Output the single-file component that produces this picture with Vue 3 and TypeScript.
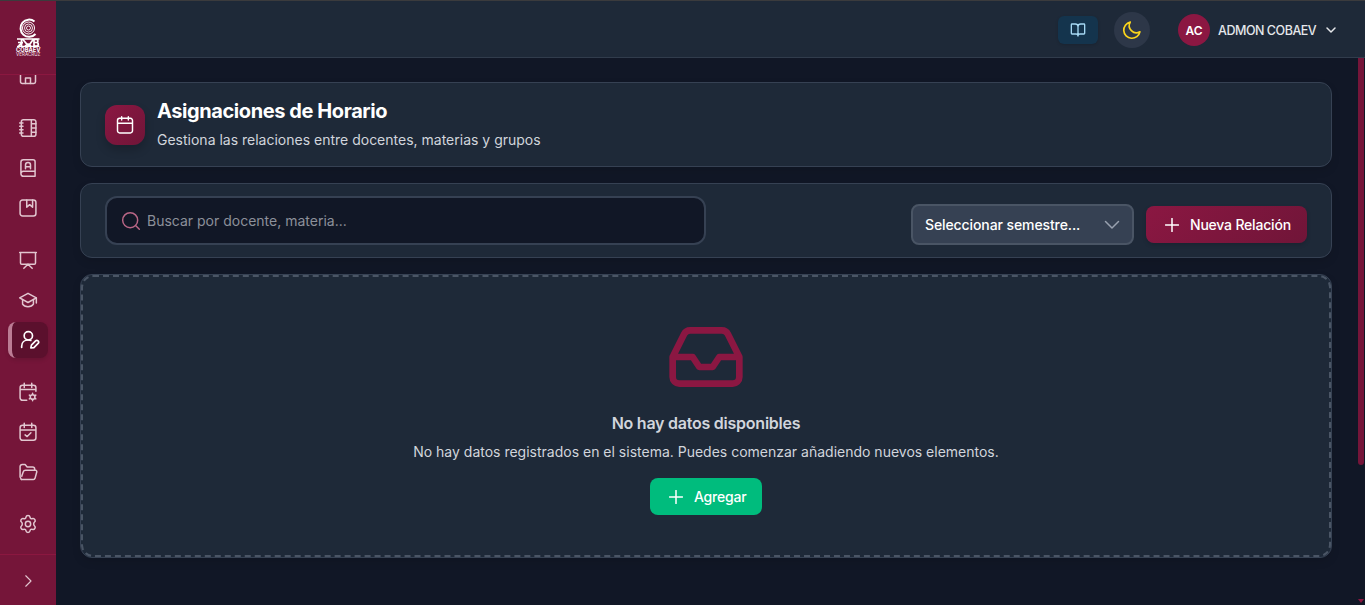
<script setup lang="ts">
interface NavItem {
  id: string
  paths: string[]
  active?: boolean
}

const groups: NavItem[][] = [
  [{ id: 'home', paths: ['M3 10l9-7 9 7v9a2 2 0 0 1-2 2H5a2 2 0 0 1-2-2z', 'M9 21v-6.500h6V21'] }],
  [
    { id: 'notebook', paths: ['M6 2h13a2.500 2.500 0 0 1 2.500 2.500v15A2.500 2.500 0 0 1 19 22H6.500A2.500 2.500 0 0 1 4 19.500v-15A2.500 2.500 0 0 1 6.500 2', 'M16 2v20M16 7h5.500M16 12h5.500M16 17h5.500M2 6h4M2 10h4M2 14h4M2 18h4'] },
    { id: 'book', paths: ['M3.500 19V5a3 3 0 0 1 3-3H18a2.500 2.500 0 0 1 2.500 2.500V22H6.500a3 3 0 0 1-3-3 3 3 0 0 1 3-3h14', 'M9 13V8.500a3 3 0 0 1 6 0V13M9 10.500h6'] },
    { id: 'bookmark', paths: ['M5.500 2.500h13a3 3 0 0 1 3 3v13a3 3 0 0 1-3 3h-13a3 3 0 0 1-3-3v-13a3 3 0 0 1 3-3z', 'M10.500 2.500V11l3.500-3 3.500 3V2.500'] },
  ],
  [
    { id: 'board', paths: ['M2 3h20M3 3v12.500a1.500 1.500 0 0 0 1.500 1.500h15a1.500 1.500 0 0 0 1.500-1.500V3', 'M12 17l-5 5M12 17l5 5'] },
    { id: 'degree', paths: ['M2 9.500L12 4l10 5.500-10 5.500z', 'M5.500 11.500v5.500c2.500 4 10.500 4 13 0v-5.500M22 9.500v6'] },
    { id: 'teacher', active: true, paths: ['M15 7a5 5 0 1 1-10 0 5 5 0 0 1 10 0z', 'M2 21v-1.500C2 15 5.500 12 10 12c1 0 2 .2 3 .5', 'M13 21.500l.7-3.400 5-5a2.100 2.100 0 0 1 3 3l-5 5z'] },
  ],
  [
    { id: 'calendar-cog', paths: ['M10.500 22h-5a3 3 0 0 1-3-3V7a3 3 0 0 1 3-3h13a3 3 0 0 1 3 3v4M7.500 1.500v5M16.500 1.500v5M2.500 9h19', 'M20.300 18a2.800 2.800 0 1 1-5.600 0 2.800 2.800 0 0 1 5.600 0z', 'M17.500 13.500V15M17.500 21v1.500M13.600 15.700l1.300.8M20.100 19.500l1.300.8M13.600 20.300l1.300-.8M20.100 16.500l1.300-.8'] },
    { id: 'calendar-check', paths: ['M5.500 4h13a3 3 0 0 1 3 3v12a3 3 0 0 1-3 3h-13a3 3 0 0 1-3-3V7a3 3 0 0 1 3-3zM7.500 1.500v5M16.500 1.500v5M2.500 9.500h19', 'M8.500 15.500l2.500 2 4.500-4.500'] },
    { id: 'folder', paths: ['M4 21L2.500 18V5.500A2.500 2.500 0 0 1 5 3h3.500L11 6h6.500A2.500 2.500 0 0 1 20 8.500V10', 'M4 21h14.500a2 2 0 0 0 1.900-1.400L22.500 12a1.500 1.500 0 0 0-1.500-2H9a3 3 0 0 0-2.800 2L4.500 17'] },
  ],
  [
    { id: 'settings', paths: ['M15.200 12a3.200 3.200 0 1 1-6.400 0 3.200 3.200 0 0 1 6.400 0z', 'M9.600 3.700c.4-2.400 4.400-2.400 4.800 0 .3 1.700 1.500 2.400 3.100 1.800 2.300-.8 4.300 2.600 2.400 4.100-1.400 1.100-1.400 3.700 0 4.800 1.900 1.500-.1 4.900-2.400 4.100-1.600-.6-2.800.1-3.100 1.800-.4 2.400-4.400 2.400-4.800 0-.3-1.700-1.500-2.400-3.100-1.800-2.300.8-4.300-2.600-2.400-4.100 1.400-1.100 1.400-3.700 0-4.800-1.900-1.500.1-4.900 2.400-4.100 1.600.6 2.800-.1 3.100-1.800z'] },
  ],
]
</script>

<template>
  <div class="app">
    <aside class="sidebar">
      <div class="brand">
        <svg class="logo" width="30" height="42" viewBox="0 0 30 42" fill="none" stroke="#fff">
          <path d="M20.500 3.500A8.600 8.600 0 1 0 21.500 16" stroke-width="2" />
          <circle cx="14.500" cy="10" r="6" stroke-width="1" />
          <circle cx="14.500" cy="10" r="4" stroke-width=".9" />
          <circle cx="14.500" cy="10" r="2" stroke-width=".9" />
          <path d="M3 21h22.500M3 28.300h22.500" stroke-width="1.300" />
          <path d="M7.500 21v7M4 24.500h5M8.500 21l6 7 5-7M4.500 28l4-3.500M20 21v7M20 21.500h2.500a1.500 1.500 0 0 1 0 3H20M22.500 24.500a1.700 1.700 0 0 1 0 3.500H20M11 28l3-2 3 2" stroke-width="1.700" />
          <text x="2" y="33.800" class="logo-name" textLength="24.500" lengthAdjust="spacingAndGlyphs">COBAEV</text>
          <text x="2" y="38" class="logo-place" textLength="24.500" lengthAdjust="spacingAndGlyphs">VERACRUZ</text>
        </svg>
      </div>
      <nav class="nav">
        <div class="nav-list">
          <div v-for="(group, g) in groups" :key="g" class="group">
            <a v-for="item in group" :key="item.id" class="item" :class="{ active: item.active }">
              <svg width="20" height="20" viewBox="0 0 24 24" class="line">
                <path v-for="d in item.paths" :key="d" :d="d" />
              </svg>
            </a>
          </div>
        </div>
      </nav>
      <div class="collapse">
        <svg width="18" height="18" viewBox="0 0 24 24" class="line"><path d="M9 5l7 7-7 7" /></svg>
      </div>
    </aside>

    <div class="body">
      <header class="topbar">
        <button class="guide">
          <svg width="16" height="16" viewBox="0 0 24 24" class="line thick"><path d="M12 7v14M3 18a1 1 0 0 1-1-1V4a1 1 0 0 1 1-1h5a4 4 0 0 1 4 4 4 4 0 0 1 4-4h5a1 1 0 0 1 1 1v13a1 1 0 0 1-1 1h-6a3 3 0 0 0-3 3 3 3 0 0 0-3-3z" /></svg>
        </button>
        <button class="theme">
          <svg width="20" height="20" viewBox="0 0 24 24" class="line thick"><path d="M21.500 14.100A8.500 8.500 0 0 1 9.900 2.500 9.800 9.800 0 1 0 21.500 14.100z" /></svg>
        </button>
        <div class="user">
          <span class="avatar">AC</span>
          <span class="name">ADMON COBAEV</span>
          <svg width="12" height="12" viewBox="0 0 24 24" class="line heavy"><path d="M4 8l8 8 8-8" /></svg>
        </div>
      </header>

      <main class="content">
        <section class="card heading">
          <span class="badge">
            <svg width="20" height="20" viewBox="0 0 24 24" class="line mid"><path d="M5.500 4h13a2.500 2.500 0 0 1 2.500 2.500v12.500a2.500 2.500 0 0 1-2.500 2.500h-13A2.500 2.500 0 0 1 3 19V6.500A2.500 2.500 0 0 1 5.500 4zM8 2v4M16 2v4M3 10h18" /></svg>
          </span>
          <div class="titles">
            <h1>Asignaciones de Horario</h1>
            <p>Gestiona las relaciones entre docentes, materias y grupos</p>
          </div>
        </section>

        <section class="card filters">
          <label class="search">
            <svg width="20" height="20" viewBox="0 0 24 24" class="line mid"><path d="M20 11a9 9 0 1 1-18 0 9 9 0 0 1 18 0zM17.500 17.500L22 22" /></svg>
            <span>Buscar por docente, materia...</span>
          </label>
          <div class="select">
            <span>Seleccionar semestre...</span>
            <svg width="16" height="16" viewBox="0 0 16 16" class="line"><path d="M1.500 4.500L8 11l6.500-6.500" /></svg>
          </div>
          <button class="primary">
            <svg width="14" height="14" viewBox="0 0 14 14" class="line"><path d="M7 .5v13M.5 7h13" /></svg>
            <span>Nueva Relación</span>
          </button>
        </section>

        <section class="card empty">
          <div class="empty-inner">
            <svg class="inbox" width="80" height="80" viewBox="0 0 24 24"><path d="M22 12h-6l-2 3h-4l-2-3H2M5.450 5.110L2 12v6a2 2 0 0 0 2 2h16a2 2 0 0 0 2-2v-6l-3.450-6.890A2 2 0 0 0 16.760 4H7.240a2 2 0 0 0-1.790 1.110z" /></svg>
            <h2>No hay datos disponibles</h2>
            <p>No hay datos registrados en el sistema. Puedes comenzar añadiendo nuevos elementos.</p>
            <button class="add">
              <svg width="14" height="14" viewBox="0 0 14 14" class="line"><path d="M7 .5v13M.5 7h13" /></svg>
              <span>Agregar</span>
            </button>
          </div>
        </section>
        <div class="scroll">
          <i class="thumb"></i>
          <i class="arrow"></i>
        </div>
      </main>
    </div>
  </div>
</template>

<style>
body { background: #101828; overflow: hidden; }
</style>

<style scoped>
* { box-sizing: border-box; margin: 0; }
.app { display: flex; width: 1365px; height: 605px; border-top: 1px solid #3b3b3d; background: #111726; font-family: Inter, "Liberation Sans", sans-serif; overflow: hidden; }
button { border: 0; font: inherit; padding: 0; color: inherit; }
svg { display: block; flex: none; }
.line { fill: none; stroke: currentColor; stroke-width: 1.5; stroke-linecap: round; stroke-linejoin: round; }
.thick { stroke-width: 2; }
.mid { stroke-width: 1.75; }
.heavy { stroke-width: 3; }

.sidebar { width: 56px; height: 604px; flex: none; display: flex; flex-direction: column; background: #751539; color: #e2c6d0; }
.brand { height: 74px; padding: 17px 0 0 14px; border-bottom: 1px solid #8b1740; flex: none; }
.logo { overflow: visible; }
.logo-name { font: 700 6px Inter, sans-serif; fill: #fff; stroke: none; }
.logo-place { font: 500 4.500px Inter, sans-serif; fill: #e8d0d8; stroke: none; }
.nav { flex: 1; overflow: hidden; }
.nav-list { margin-top: -17px; display: flex; flex-direction: column; gap: 16px; padding: 0 8px; }
.group { display: flex; flex-direction: column; gap: 4px; }
.item { height: 36px; display: flex; align-items: center; justify-content: center; border-radius: 8px; }
.item .line { stroke-width: 1.8; }
.active { background: #5b102d; color: #fff; border-left: 4px solid #bb7c94; box-shadow: 0 2px 4px rgba(0, 0, 0, .12); }
.active .line { stroke-width: 2; }
.collapse { height: 51px; padding-top: 2px; flex: none; border-top: 1px solid #8b1740; display: flex; align-items: center; justify-content: center; }

.body { flex: 1; min-width: 0; display: flex; flex-direction: column; }
.topbar { height: 57px; flex: none; background: #1e2938; border-bottom: 1px solid #313c4c; display: flex; align-items: center; justify-content: flex-end; padding: 2px 28px 0 0; }
.guide { width: 40px; height: 28px; border-radius: 6px; background: #14344d; color: #a5d8f3; display: grid; place-items: center; margin-right: 16px; box-shadow: 0 1px 3px rgba(0, 0, 0, .15); }
.theme { width: 36px; height: 36px; border-radius: 50%; background: #2d3748; color: #fbd51c; display: grid; place-items: center; margin-right: 28px; }
.user { display: flex; align-items: center; color: #e5e7eb; }
.avatar { width: 32px; height: 32px; border-radius: 50%; background: #8b1742; color: #fff; font-size: 12px; font-weight: 600; display: grid; place-items: center; margin-right: 8px; }
.name { width: 98px; font-size: 12.5px; letter-spacing: -.47px; font-weight: 500; white-space: nowrap; margin-right: 9px; }

.content { position: relative; flex: 1; padding: 24px 33px 0 24px; display: flex; flex-direction: column; gap: 16px; }
.card { border: 1px solid #364153; border-radius: 12px; background: #1e2938; box-shadow: 0 4px 8px rgba(0, 0, 0, .1); }
.heading { height: 85px; padding: 0 24px; display: flex; align-items: center; gap: 12px; }
.badge { width: 40px; height: 40px; border-radius: 12px; background: linear-gradient(135deg, #8b1742, #701538); color: #fff; display: grid; place-items: center; box-shadow: 0 5px 10px rgba(0, 0, 0, .2); }
.titles { padding-bottom: 2px; }
h1 { font-size: 20px; line-height: 28px; font-weight: 700; letter-spacing: -.42px; color: #fff; white-space: nowrap; }
.heading p { font-size: 14px; line-height: 20px; margin-top: 5px; color: #d1d5dc; white-space: nowrap; }
.filters { height: 75px; padding: 0 24px 12px; display: flex; align-items: flex-end; }
.search { width: 601px; height: 49px; border: 2px solid #364153; border-radius: 12px; background: #111726; display: flex; align-items: center; gap: 6px; padding-left: 14px; color: #8c909a; font-size: 14px; margin-right: auto; }
.search svg { color: #b96686; }
.select { width: 223px; height: 41px; border: 2px solid #4a5565; border-radius: 8px; background: #364153; color: #fff; font-size: 14px; font-weight: 500; letter-spacing: -.1px; display: flex; align-items: center; justify-content: space-between; padding: 0 12px; margin-right: 12px; }
.select svg { color: #99a1af; }
.primary, .add { height: 37px; border-radius: 8px; color: #fff; font-size: 14px; font-weight: 500; letter-spacing: -.2px; display: flex; align-items: center; gap: 11px; white-space: nowrap; }
.primary { width: 161px; padding-left: 19px; margin-bottom: 2px; background: linear-gradient(135deg, #8b1742, #701538); box-shadow: 0 2px 4px rgba(0, 0, 0, .15); }
.empty { height: 284px; }
.empty-inner { height: 100%; border: 2px dashed #4a5565; border-radius: 12px; display: flex; flex-direction: column; align-items: center; padding-top: 40px; }
.inbox { fill: none; stroke: #8b1742; stroke-width: 2; stroke-linecap: round; stroke-linejoin: round; }
h2 { font-size: 16px; line-height: 24px; font-weight: 600; letter-spacing: -.24px; color: #d1d5dc; margin-top: 14px; white-space: nowrap; }
.empty p { font-size: 14px; line-height: 20px; color: #d1d5dc; margin-top: 7px; white-space: nowrap; }
.add { width: 112px; padding-left: 19px; background: #00bc7d; margin-top: 16px; }
.scroll { position: absolute; right: 1px; top: 0; bottom: 2px; width: 6px; display: flex; flex-direction: column; justify-content: space-between; }
.thumb { height: 407px; border-radius: 0 0 3px 3px; background: #751539; }
.arrow { height: 4px; background: #8b1740; clip-path: polygon(0 0, 100% 0, 50% 100%); }
</style>
